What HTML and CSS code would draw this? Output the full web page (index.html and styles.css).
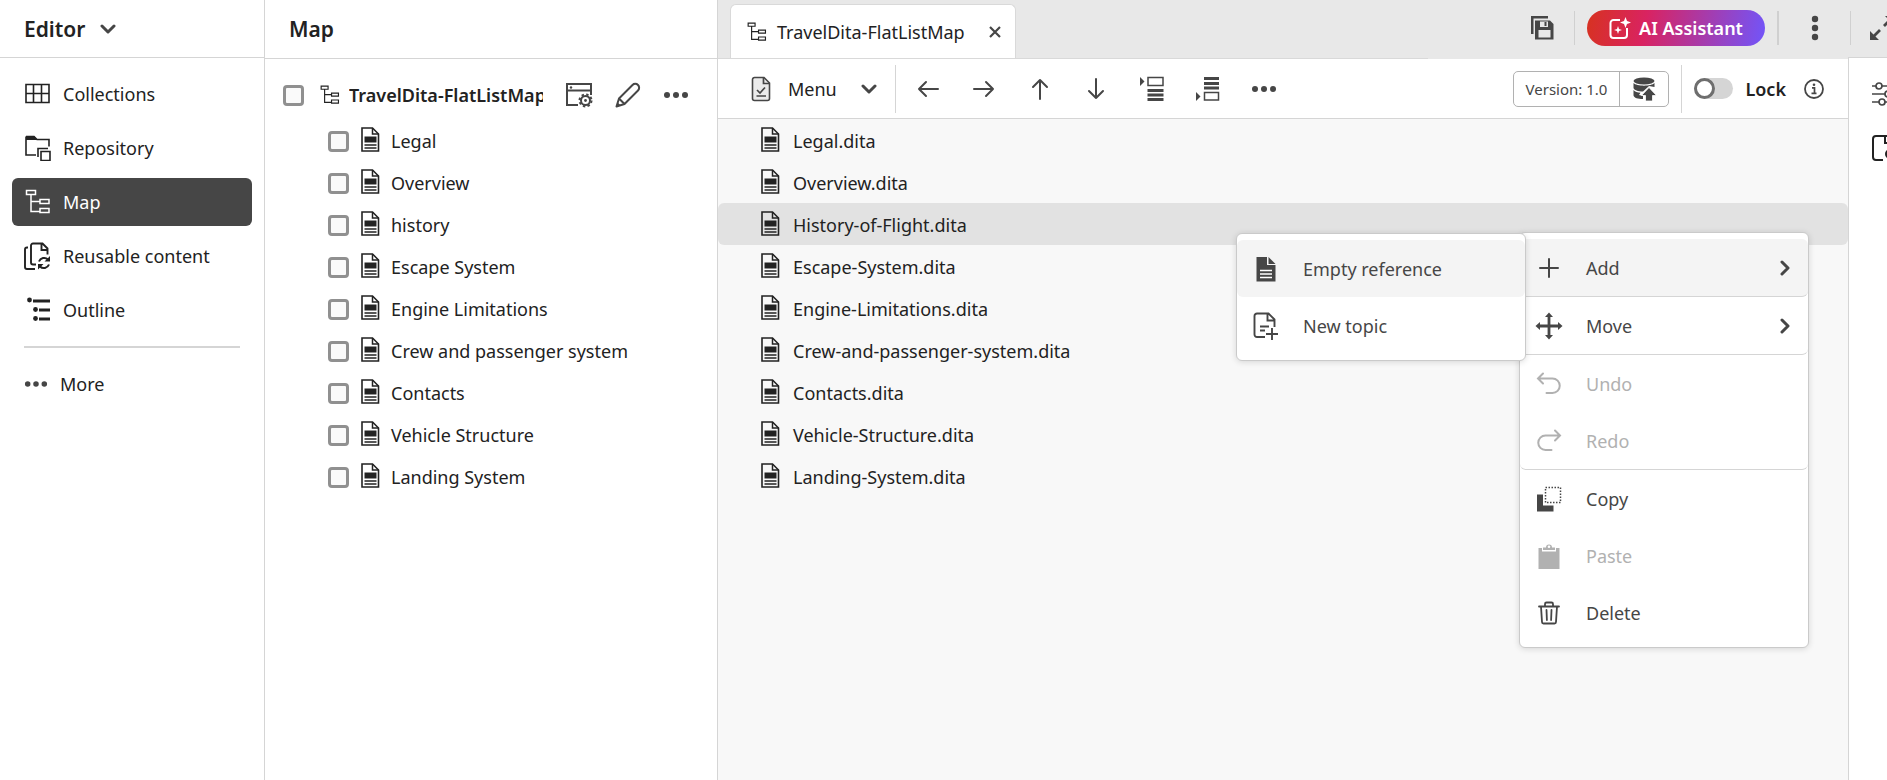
FILE: index.html
```html
<!DOCTYPE html>
<html lang="en">
<head>
<meta charset="utf-8">
<title>Editor</title>
<link rel="stylesheet" href="styles.css">
</head>
<body>
<svg class="sprite" aria-hidden="true">
  <symbol id="i-chevron" viewBox="0 0 16 10"><path d="M2 2l6 6 6-6" fill="none" stroke="currentColor" stroke-width="3" stroke-linecap="round" stroke-linejoin="round"/></symbol>
  <symbol id="i-right" viewBox="0 0 10 16"><path d="M2 2l6 6-6 6" fill="none" stroke="currentColor" stroke-width="3" stroke-linecap="round" stroke-linejoin="round"/></symbol>
  <symbol id="i-map" viewBox="0 0 26 26"><path d="M1.5 1.5h9v4h-9zM15 10.500h9v4h-9zM15 19.500h9v4h-9zM6 5.500v17h9M6 12.500h9" fill="none" stroke="currentColor" stroke-width="1.500"/></symbol>
  <symbol id="i-doc" viewBox="0 0 19 25"><path d="M1 1h10.500l6 6v17H1z" fill="none" stroke="currentColor" stroke-width="1.600"/><path d="M11.500 1v6h6" fill="none" stroke="currentColor" stroke-width="1.500"/><path d="M3.500 9.500h12v6h-12z" fill="currentColor"/><path d="M3.500 18h12M3.500 21h12" stroke="currentColor" stroke-width="1.400"/></symbol>
  <symbol id="i-dots" viewBox="0 0 26 8"><g fill="currentColor"><circle cx="4" cy="4" r="3"/><circle cx="13" cy="4" r="3"/><circle cx="22" cy="4" r="3"/></g></symbol>
  <symbol id="i-arrow" viewBox="0 0 22 18"><path d="M21 9H2M9 2L2 9l7 7" fill="none" stroke="currentColor" stroke-width="2" stroke-linecap="round" stroke-linejoin="round"/></symbol>
  <symbol id="i-undo" viewBox="0 0 26 24"><path d="M7 1.500L2 6.500l5 5M2.500 6.500h14a7 7 0 0 1 0 14.500h-6" fill="none" stroke="currentColor" stroke-width="2" stroke-linecap="round"/></symbol>
</svg>

<div class="app">
  <nav class="sidebar">
    <header class="side-head">
      <button class="switcher">Editor <svg width="16" height="10"><use href="#i-chevron"/></svg></button>
    </header>
    <div class="side-list">
      <button class="side-item"><svg width="26" height="26" viewBox="0 0 26 26"><path d="M1 3.500h23v18H1zM1 12.500h23M8.500 3.500v18M16.500 3.500v18" fill="none" stroke="currentColor" stroke-width="1.600"/></svg>Collections</button>
      <button class="side-item"><svg width="26" height="26" viewBox="0 0 26 26"><path d="M1 1.500h8l3 3h12v7M1 1.500v18.500h10" fill="none" stroke="currentColor" stroke-width="1.600"/><path d="M1 1h8l3.500 4H1z" fill="currentColor"/><path d="M13 22v-8.500h10M16 16.500h9v9h-9z" fill="none" stroke="currentColor" stroke-width="1.600"/></svg>Repository</button>
      <button class="side-item active"><svg width="26" height="26"><use href="#i-map"/></svg>Map</button>
      <button class="side-item"><svg class="wide" width="28" height="28" viewBox="0 0 28 28"><path d="M13 22.500H10a2 2 0 0 1-2-2V3.500a2 2 0 0 1 2-2h9.500l5 5v6M18.500 2v6h6M5 5.500H4a2 2 0 0 0-2 2V25a2 2 0 0 0 2 2h8" fill="none" stroke="currentColor" stroke-width="1.900"/><path d="M16 19.500a5.500 5.500 0 0 1 9-2M26 22.500a5.500 5.500 0 0 1-9 2" fill="none" stroke="currentColor" stroke-width="2"/><path d="M27 14v5.500h-5.500zM15 27.500V22h5.500z" fill="currentColor"/></svg>Reusable content</button>
      <button class="side-item"><svg width="26" height="26" viewBox="0 0 26 26"><g fill="currentColor"><circle cx="4.500" cy="3" r="2.400"/><circle cx="10.500" cy="12.500" r="2.400"/><circle cx="10.500" cy="21.500" r="2.400"/></g><path d="M8 4h17M14 13h11M14 22h11" stroke="currentColor" stroke-width="3"/></svg>Outline</button>
    </div>
    <hr class="side-rule">
    <button class="side-more"><svg width="24" height="8"><use href="#i-dots"/></svg>More</button>
  </nav>

  <section class="map-panel">
    <header class="map-head"><h2>Map</h2></header>
    <div class="map-root">
      <input type="checkbox" id="root"><label for="root"><svg width="20" height="20"><use href="#i-map"/></svg><span>TravelDita-FlatListMap</span></label>
      <button class="icon-btn" aria-label="Map settings"><svg width="28" height="26" viewBox="0 0 28 26"><path d="M13 23H2V2h24v11M2 8.500h24" fill="none" stroke="currentColor" stroke-width="2"/><circle cx="6" cy="5.500" r="1.200" fill="currentColor"/><circle cx="20.500" cy="18.500" r="4.500" fill="none" stroke="currentColor" stroke-width="2"/><circle cx="20.500" cy="18.500" r="6" fill="none" stroke="currentColor" stroke-width="2" stroke-dasharray="2.400 2.310"/><circle cx="20.500" cy="18.500" r="1.400" fill="currentColor"/></svg></button>
      <button class="icon-btn" aria-label="Edit"><svg width="26" height="26" viewBox="0 0 26 26"><path d="M1.500 24.500L4 16.500 17.500 3a3.400 3.400 0 0 1 5.500 5.500L9.500 22zM4 16.500L9.500 22" fill="none" stroke="currentColor" stroke-width="2" stroke-linejoin="round"/><path d="M1.500 24.500l1.200-4 2.800 2.800z" fill="currentColor"/></svg></button>
      <button class="icon-btn" aria-label="More options"><svg width="26" height="8"><use href="#i-dots"/></svg></button>
    </div>
    <ul class="map-list">
      <li><input type="checkbox" id="c1"><label for="c1"><svg width="19" height="25"><use href="#i-doc"/></svg>Legal</label></li>
      <li><input type="checkbox" id="c2"><label for="c2"><svg width="19" height="25"><use href="#i-doc"/></svg>Overview</label></li>
      <li><input type="checkbox" id="c3"><label for="c3"><svg width="19" height="25"><use href="#i-doc"/></svg>history</label></li>
      <li><input type="checkbox" id="c4"><label for="c4"><svg width="19" height="25"><use href="#i-doc"/></svg>Escape System</label></li>
      <li><input type="checkbox" id="c5"><label for="c5"><svg width="19" height="25"><use href="#i-doc"/></svg>Engine Limitations</label></li>
      <li><input type="checkbox" id="c6"><label for="c6"><svg width="19" height="25"><use href="#i-doc"/></svg>Crew and passenger system</label></li>
      <li><input type="checkbox" id="c7"><label for="c7"><svg width="19" height="25"><use href="#i-doc"/></svg>Contacts</label></li>
      <li><input type="checkbox" id="c8"><label for="c8"><svg width="19" height="25"><use href="#i-doc"/></svg>Vehicle Structure</label></li>
      <li><input type="checkbox" id="c9"><label for="c9"><svg width="19" height="25"><use href="#i-doc"/></svg>Landing System</label></li>
    </ul>
  </section>

  <main class="work">
    <header class="tabbar">
      <div class="tabs">
        <div class="tab">
          <svg width="20" height="20"><use href="#i-map"/></svg><span>TravelDita-FlatListMap</span>
          <button class="icon-btn" aria-label="Close tab"><svg width="12" height="12" viewBox="0 0 12 12"><path d="M1 1l10 10M11 1L1 11" stroke="currentColor" stroke-width="2.200"/></svg></button>
        </div>
      </div>
      <div class="tabbar-tools">
        <button class="icon-btn save" aria-label="Save all"><svg width="24" height="24" viewBox="0 0 24 24"><path d="M1 0h17v2.500H3.500V18H1z" fill="currentColor"/><path fill-rule="evenodd" d="M5 4.500h15l3.500 3.500V23.500H5zM10 5.500v5.500h8V5.500zM8.500 14v7.500h12V14z" fill="currentColor"/><path d="M14.500 6h2v4h-2z" fill="currentColor"/></svg></button>
        <button class="ai"><svg width="22" height="22" viewBox="0 0 22 22"><path d="M11 3H4.500a3 3 0 0 0-3 3v12a3 3 0 0 0 3 3H15a3 3 0 0 0 3-3v-7" fill="none" stroke="currentColor" stroke-width="2"/><path d="M16.500 0l1.500 4 4 1.500-4 1.500-1.500 4L15 7l-4-1.500L15 4zM9 9l1 3 3 1-3 1-1 3-1-3-3-1 3-1z" fill="currentColor"/></svg>AI Assistant</button>
        <button class="icon-btn kebab" aria-label="Options"><svg width="8" height="26" viewBox="0 0 8 26"><g fill="currentColor"><circle cx="4" cy="4" r="3.200"/><circle cx="4" cy="13" r="3.200"/><circle cx="4" cy="22" r="3.200"/></g></svg></button>
        <button class="icon-btn expand" aria-label="Expand"><svg width="26" height="26" viewBox="0 0 26 26"><path d="M5 21l6-6M15 11l6-6" stroke="currentColor" stroke-width="2.800"/><path d="M1 16v9h9zM25 10V1h-9z" fill="currentColor"/></svg></button>
      </div>
    </header>
    <div class="work-body">
      <section class="editor">
        <div class="toolbar">
          <button class="menu-btn"><svg width="20" height="26" viewBox="0 0 20 26"><path d="M3.500 1.500H13l5.500 5.500v15.500a2 2 0 0 1-2 2h-13a2 2 0 0 1-2-2v-19a2 2 0 0 1 2-2z" fill="#ebebeb" stroke="currentColor" stroke-width="1.600"/><path d="M12.500 1.500v6h6M6 14l3 3 5-5.500M5.500 20h9.500" fill="none" stroke="currentColor" stroke-width="1.700"/></svg><span>Menu</span><svg width="16" height="10"><use href="#i-chevron"/></svg></button>
          <button class="icon-btn tool" aria-label="Move left"><svg width="24" height="18"><use href="#i-arrow"/></svg></button>
          <button class="icon-btn tool flip" aria-label="Move right"><svg width="24" height="18"><use href="#i-arrow"/></svg></button>
          <button class="icon-btn tool up" aria-label="Move up"><svg width="24" height="18"><use href="#i-arrow"/></svg></button>
          <button class="icon-btn tool down" aria-label="Move down"><svg width="24" height="18"><use href="#i-arrow"/></svg></button>
          <button class="icon-btn tool" aria-label="Insert before"><svg width="24" height="26" viewBox="0 0 24 26"><path d="M0 1l4.500 4.500L0 10z" fill="currentColor"/><path d="M8 1.500h15v8H8z" fill="none" stroke="currentColor" stroke-width="1.500"/><path d="M7.500 14.500h16M7.500 19h16M7.500 23.500h16" stroke="currentColor" stroke-width="3"/></svg></button>
          <button class="icon-btn tool" aria-label="Insert after"><svg width="24" height="26" viewBox="0 0 24 26"><path d="M0 16l4.500 4.500L0 25z" fill="currentColor"/><path d="M8.500 16.500h14V24h-14z" fill="none" stroke="currentColor" stroke-width="1.500"/><path d="M8 2.500h15M8 7.500h15M8 12h15" stroke="currentColor" stroke-width="3"/></svg></button>
          <button class="icon-btn tool" aria-label="More tools"><svg width="26" height="8"><use href="#i-dots"/></svg></button>
          <div class="toolbar-right">
            <div class="version"><button>Version: 1.0</button><button aria-label="Save as new version"><svg width="24" height="24" viewBox="0 0 24 24"><g fill="currentColor"><ellipse cx="12" cy="4" rx="10.500" ry="3.500"/><path d="M1.500 6c3 3.500 18 3.500 21 0v4l-5.500-1-6 5.500C6 14.500 2 13 1.500 11zM1.500 13c1.500 2 4 2.500 7 2.800L7 18l4 1v3C6 22 2 21 1.500 18.500z"/><path d="M17 10.500l7.500 8H20.500v5.500h-7v-5.500h-4z" stroke="#fff" stroke-width=".8"/></g></svg></button></div>
            <label class="lock"><input type="checkbox" role="switch"><span>Lock</span></label>
            <button class="icon-btn info" aria-label="Lock information"><svg width="20" height="20" viewBox="0 0 20 20"><circle cx="10" cy="10" r="9" fill="none" stroke="currentColor" stroke-width="1.800"/><circle cx="10" cy="5.800" r="1.300" fill="currentColor"/><path d="M8 8.800h2.500V14M7.500 14.300h5" fill="none" stroke="currentColor" stroke-width="1.700"/></svg></button>
          </div>
        </div>
        <ul class="topics">
          <li><svg width="19" height="25"><use href="#i-doc"/></svg>Legal.dita</li>
          <li><svg width="19" height="25"><use href="#i-doc"/></svg>Overview.dita</li>
          <li class="selected"><svg width="19" height="25"><use href="#i-doc"/></svg>History-of-Flight.dita</li>
          <li><svg width="19" height="25"><use href="#i-doc"/></svg>Escape-System.dita</li>
          <li><svg width="19" height="25"><use href="#i-doc"/></svg>Engine-Limitations.dita</li>
          <li><svg width="19" height="25"><use href="#i-doc"/></svg>Crew-and-passenger-system.dita</li>
          <li><svg width="19" height="25"><use href="#i-doc"/></svg>Contacts.dita</li>
          <li><svg width="19" height="25"><use href="#i-doc"/></svg>Vehicle-Structure.dita</li>
          <li><svg width="19" height="25"><use href="#i-doc"/></svg>Landing-System.dita</li>
        </ul>

        <div class="menu context" role="menu">
          <button class="hover ruled"><i><svg width="20" height="20" viewBox="0 0 20 20"><path d="M10 1v18M1 10h18" stroke="currentColor" stroke-width="2" stroke-linecap="round"/></svg></i><span>Add</span><svg width="10" height="16"><use href="#i-right"/></svg></button>
          <button class="ruled"><i><svg width="28" height="28" viewBox="0 0 28 28"><path d="M14 3v22M3 14h22" stroke="currentColor" stroke-width="2.800"/><path d="M14 .5l4 4.500h-8zM14 27.500l4-4.500h-8zM.5 14L5 10v8zM27.500 14L23 10v8z" fill="currentColor"/></svg></i><span>Move</span><svg width="10" height="16"><use href="#i-right"/></svg></button>
          <button disabled><i><svg width="26" height="24"><use href="#i-undo"/></svg></i><span>Undo</span></button>
          <button class="ruled" disabled><i class="flip"><svg width="26" height="24"><use href="#i-undo"/></svg></i><span>Redo</span></button>
          <button><i><svg width="26" height="26" viewBox="0 0 26 26"><path d="M1 8.500h6v11h10.500v6H1z" fill="currentColor"/><path d="M9.500 1.500h15v15h-15z" fill="none" stroke="currentColor" stroke-width="1.500" stroke-dasharray="1.500 1.500"/></svg></i><span>Copy</span></button>
          <button disabled><i><svg width="22" height="26" viewBox="0 0 22 26"><path d="M.5 5H4v3.500h14V5h3.500v21H.5z" fill="currentColor"/><path d="M5 4.500h3a3 3 0 0 1 6 0h3V7H5z" fill="currentColor"/><circle cx="11" cy="3.700" r="1.300" fill="#fff"/></svg></i><span>Paste</span></button>
          <button><i><svg width="22" height="24" viewBox="0 0 22 24"><path d="M1 5.500h20M3 5.500l1 15.500a1.500 1.500 0 0 0 1.500 1.500h11A1.500 1.500 0 0 0 18 21l1-15.500M7 5V3a1.500 1.500 0 0 1 1.500-1.500h5A1.500 1.500 0 0 1 15 3v2M8.500 9l.4 10M13.500 9l-.4 10" fill="none" stroke="currentColor" stroke-width="1.800" stroke-linecap="round"/></svg></i><span>Delete</span></button>
        </div>
        <div class="menu submenu" role="menu">
          <button class="hover"><i><svg width="20" height="26" viewBox="0 0 20 26"><path d="M.5 1H11v8h8.500v16.500H.5z" fill="currentColor"/><path d="M12.500 1l7 7h-7z" fill="currentColor"/><path d="M4 14.500h12M4 18h12M4 21.500h12" stroke="#fff" stroke-width="1.400"/></svg></i><span>Empty reference</span></button>
          <button><i><svg width="26" height="28" viewBox="0 0 26 28"><path d="M12 25H4a2.500 2.500 0 0 1-2.500-2.500V4A2.500 2.500 0 0 1 4 1.500h11.500l6 6V15M14.500 2v6.500h7M7 14.500h9M7 18.500h5M19 16v12M13 22h12" fill="none" stroke="currentColor" stroke-width="1.900"/></svg></i><span>New topic</span></button>
        </div>
      </section>
      <aside class="rail">
        <button class="icon-btn" aria-label="Properties"><svg width="26" height="24" viewBox="0 0 26 24"><path d="M0 4h4M10 4h16M0 12h13M19 12h7M0 20h7M13 20h13" stroke="currentColor" stroke-width="1.700"/><g fill="none" stroke="currentColor" stroke-width="1.700"><circle cx="7" cy="4" r="3"/><circle cx="16" cy="12" r="3"/><circle cx="10" cy="20" r="3"/></g></svg></button>
        <button class="icon-btn" aria-label="File properties"><svg width="26" height="26" viewBox="0 0 26 26"><path d="M11 25H4a3 3 0 0 1-3-3V4a3 3 0 0 1 3-3h18v9M13 1v7h9" fill="none" stroke="#222" stroke-width="2"/><circle cx="18" cy="19" r="4" fill="none" stroke="#222" stroke-width="2"/></svg></button>
      </aside>
    </div>
  </main>
</div>
</body>
</html>
```
FILE: styles.css
```css
*, *::before { box-sizing: border-box; }

body {
  margin: 0;
  font: 18px/24px "Noto Sans", "Open Sans", sans-serif;
  color: #222;
  background: #fff;
}

button {
  font: inherit;
  color: inherit;
  background: none;
  border: 0;
  padding: 0;
  margin: 0;
  text-align: left;
}

svg { display: block; flex: none; }
.sprite { position: absolute; width: 0; height: 0; }
ul { list-style: none; margin: 0; padding: 0; }

.icon-btn { display: flex; align-items: center; justify-content: center; color: #464646; }
.flip svg { transform: scaleX(-1); }

.app {
  display: grid;
  grid-template-columns: 265px 453px minmax(0, 1fr);
  min-height: 100vh;
  overflow: hidden;
}

/* Sidebar */
.sidebar { border-right: 1px solid #d5d5d5; }
.side-head { height: 58px; border-bottom: 1px solid #d5d5d5; padding: 0 24px; display: flex; align-items: center; }
.switcher { display: flex; align-items: center; gap: 15px; font-size: 21px; font-weight: 600; }
.switcher svg { color: #464646; }
.side-list { display: flex; flex-direction: column; gap: 6px; padding: 12px; }
.side-item { display: flex; align-items: center; height: 48px; padding-left: 13px; border-radius: 6px; white-space: nowrap; }
.side-item svg { margin-right: 12px; }
.side-item .wide { margin-left: -2px; }
.side-item.active { background: #464646; color: #fff; }
.side-rule { margin: 0 24px; border: 0; height: 2px; background: #d5d5d5; }
.side-more { display: flex; align-items: center; gap: 12px; padding: 24px; }
.side-more svg { color: #464646; }

/* Map panel */
.map-panel { border-right: 1px solid #d5d5d5; }
.map-head { height: 59px; border-bottom: 1px solid #d5d5d5; padding: 0 24px; display: flex; align-items: center; }
.map-head h2 { margin: 0; font-size: 21px; line-height: 28px; font-weight: 600; }
.map-root { display: flex; align-items: center; height: 60px; padding: 12px 28px 0 18px; }
.map-root label { display: flex; align-items: center; gap: 9px; margin: 0 22px 0 16px; flex: 1; min-width: 0; font-weight: 600; }
.map-root label span { overflow: hidden; white-space: nowrap; }
.map-root .icon-btn + .icon-btn { margin-left: 22px; }
.map-list li { display: flex; align-items: center; height: 42px; padding: 2px 0 0 63px; }
.map-list label { display: flex; align-items: center; gap: 11px; margin-left: 12px; }
.map-list svg, .topics svg { margin-bottom: 3px; }

.map-panel input {
  appearance: none;
  flex: none;
  width: 21px;
  height: 21px;
  margin: 0;
  border: 3px solid #909090;
  border-radius: 4px;
  background: #fafafa;
}

/* Tab bar */
.work { display: flex; flex-direction: column; min-width: 0; }
.tabbar { display: flex; height: 59px; background: #e8e8e8; overflow: hidden; }
.tabs { display: flex; flex: 1; min-width: 0; align-items: flex-end; padding-left: 12px; border-bottom: 1px solid #d9d9d9; }
.tab {
  display: flex;
  align-items: center;
  height: 54px;
  padding: 0 14px 0 16px;
  background: #fff;
  border: 1px solid #d9d9d9;
  border-bottom: 0;
  border-radius: 6px 6px 0 0;
  white-space: nowrap;
}
.tab span { margin: 0 24px 0 10px; }
.tabbar-tools { display: flex; align-items: center; height: 56px; padding-left: 102px; margin-right: -8px; }
.tabbar-tools .icon-btn { height: 34px; }
.save { border-right: 1px solid #d0d0d0; padding-right: 20px; }
.ai {
  display: flex;
  align-items: center;
  justify-content: center;
  gap: 8px;
  width: 178px;
  height: 36px;
  margin: 0 12px;
  border-radius: 18px;
  color: #fff;
  font-weight: 600;
  background: linear-gradient(100deg, #d73220 0%, #d92361 33%, #7155fa 100%);
}
.kebab { width: 74px; border: solid #d0d0d0; border-width: 0 1px 0 2px; }
.expand { margin-left: 18px; }

/* Editor */
.work-body { display: flex; flex: 1; }
.editor { position: relative; flex: 1; min-width: 0; background: #f8f8f8; }
.toolbar { display: flex; align-items: center; height: 60px; padding-left: 33px; background: #fff; border-bottom: 1px solid #d5d5d5; }
.menu-btn { display: flex; align-items: center; width: 145px; height: 48px; margin-right: 18px; border-right: 1px solid #d5d5d5; }
.menu-btn span { flex: 1; margin-left: 17px; }
.menu-btn svg { color: #464646; }
.menu-btn svg:last-child { margin-right: 18px; }
.tool { width: 28px; margin-right: 28px; }
.up svg { transform: rotate(90deg); }
.down svg { transform: rotate(-90deg); }
.toolbar-right { display: flex; align-items: center; margin-left: auto; padding-right: 24px; }
.version { display: flex; height: 36px; margin-right: 12px; border: 1px solid #b1b1b1; border-radius: 5px; font-size: 15px; color: #464646; }
.version button { display: flex; align-items: center; padding: 0 12px; }
.version button + button { border-left: 1px solid #b1b1b1; }
.lock { display: flex; align-items: center; gap: 12px; height: 48px; padding-left: 12px; border-left: 1px solid #d5d5d5; font-weight: 600; }
.lock input { appearance: none; width: 39px; height: 21px; margin: 0; border-radius: 11px; background: #d5d5d5; }
.lock input::before { content: ""; display: block; width: 21px; height: 21px; border: 3px solid #6e6e6e; border-radius: 50%; background: #fff; }
.info { margin-left: 18px; }

.topics li { display: flex; align-items: center; gap: 13px; height: 42px; padding: 2px 0 0 43px; border-radius: 6px; }
.topics .selected { background: #e2e2e2; }

/* Menus */
.menu {
  position: absolute;
  width: 290px;
  padding: 6px 0;
  background: #fff;
  border: 1px solid #cacaca;
  border-radius: 6px;
  box-shadow: 0 1px 6px rgba(0, 0, 0, .14);
  color: #464646;
}
.context { top: 173px; right: 39px; }
.submenu { top: 174px; right: 322px; }
.menu button { display: flex; align-items: center; width: 100%; height: 57px; padding-right: 18px; border-radius: 6px; }
.menu i { display: flex; justify-content: center; width: 28px; margin: 0 23px 0 15px; }
.menu span { flex: 1; }
.menu button:disabled { color: #b1b1b1; }
.menu .ruled { height: 58px; border-bottom: 1px solid #d5d5d5; }
.menu .hover { background: #f4f4f4; }

/* Right rail */
.rail { display: flex; flex-direction: column; gap: 29px; width: 39px; margin-top: -2px; padding: 24px 0 0 23px; background: #fff; border: solid #d5d5d5; border-width: 1px 0 0 1px; overflow: hidden; }
.rail .icon-btn { justify-content: flex-start; width: 26px; }
```
